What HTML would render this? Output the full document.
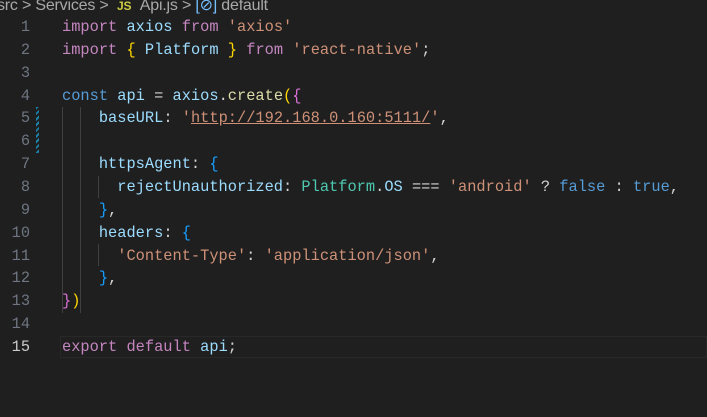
<!DOCTYPE html>
<html><head><style>
body{margin:0;background:#1f1f1f;width:707px;height:417px;overflow:hidden;position:relative;font-family:"Liberation Mono",monospace}
.bc{position:absolute;top:-4px;left:-3px;font:16px "Liberation Sans",sans-serif;color:#a9a9a9;white-space:nowrap;height:20px;line-height:20px;letter-spacing:-0.2px}
.bc .js{color:#cbcb41;font-weight:bold;font-size:12px}
.ln{position:absolute;left:0;width:30px;text-align:right;color:#6e7681;font-size:15.3px;line-height:22.86px}
.code{position:absolute;left:62px;top:16px;font-size:15.35px;line-height:22.86px;color:#d4d4d4;white-space:pre}
.k{color:#c586c0}.b{color:#569cd6}.v{color:#9cdcfe}.s{color:#ce9178}.f{color:#dcdcaa}.c{color:#4ec9b0}.y{color:#ffd700}.p{color:#da70d6}.bl{color:#179fff}
.cur{position:absolute;left:60px;right:0;top:336px;height:22px;border:1px solid #282828;box-sizing:border-box}
.g{position:absolute;width:1px;background:#404040}
.mod{position:absolute;left:36px;width:3px;background:repeating-linear-gradient(135deg,#1b81a8 0 2px,#1f1f1f 2px 4px)}
</style></head><body>
<div class="bc">src &gt; Services &gt; &nbsp;<span class="js">JS</span> &nbsp;Api.js &gt; <span style="color:#75beff">[⊘]</span> default</div>
<div class="cur"></div>
<div class="mod" style="top:107px;height:46px"></div>
<div class="g" style="left:62px;top:107px;height:206px"></div>
<div class="g" style="left:80px;top:107px;height:206px"></div>
<div class="g" style="left:98px;top:176px;height:22px"></div>
<div class="g" style="left:98px;top:244px;height:22px"></div>
<div class="ln" style="top:16px">1<br>2<br>3<br>4<br>5<br>6<br>7<br>8<br>9<br>10<br>11<br>12<br>13<br>14<br><span style="color:#ccc">15</span></div>
<div class="code"><span class="k">import</span> <span class="v">axios</span> <span class="k">from</span> <span class="s">'axios'</span>
<span class="k">import</span> <span class="y">{</span> <span class="v">Platform</span> <span class="y">}</span> <span class="k">from</span> <span class="s">'react-native'</span>;

<span class="b">const</span> <span class="v">api</span> = <span class="v">axios</span>.<span class="f">create</span><span class="y">(</span><span class="p">{</span>
    <span class="v">baseURL</span>: <span class="s">'<u>http://192.168.0.160:5111/</u>'</span>,

    <span class="v">httpsAgent</span>: <span class="bl">{</span>
      <span class="v">rejectUnauthorized</span>: <span class="c">Platform</span>.<span class="v">OS</span> === <span class="s">'android'</span> ? <span class="b">false</span> : <span class="b">true</span>,
    <span class="bl">}</span>,
    <span class="v">headers</span>: <span class="bl">{</span>
      <span class="s">'Content-Type'</span>: <span class="s">'application/json'</span>,
    <span class="bl">}</span>,
<span class="p">}</span><span class="y">)</span>

<span class="k">export</span> <span class="k">default</span> <span class="v">api</span>;</div>
</body></html>
